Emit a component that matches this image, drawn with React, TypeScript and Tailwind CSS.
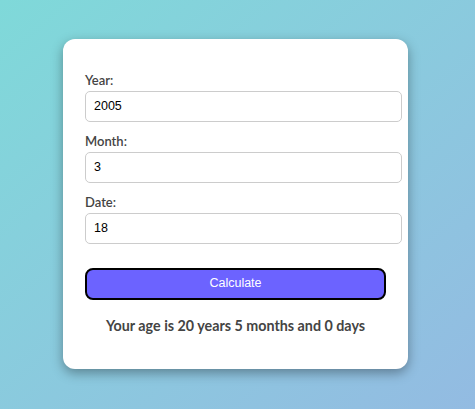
export default function App() {
  const fields = [
    { label: 'Year:', value: '2005' },
    { label: 'Month:', value: '3' },
    { label: 'Date:', value: '18' },
  ]

  return (
    <div className="min-h-screen w-full flex items-center justify-center pr-[4px] pb-[2px] bg-gradient-to-br from-[#7fd9d9] to-[#93bbe2] font-['Lato',sans-serif]">
      <div className="w-[345px] bg-white rounded-[12px] shadow-[0_4px_12px_rgba(0,0,0,0.35)] pl-[22px] pr-[6px] pt-[33px] pb-[34px]">
        {fields.map((f, i) => (
          <div key={f.label} className={i > 0 ? 'mt-[11px]' : ''}>
            <label className="block text-[13px] leading-[16px] font-semibold text-[#444] mb-[3px]">{f.label}</label>
            <input
              type="text"
              defaultValue={f.value}
              className="block w-[317px] h-[31px] px-[8px] border border-[#ccc] rounded-[5px] text-[12.5px] text-black font-['Liberation_Sans',Arial,sans-serif] outline-none"
            />
          </div>
        ))}
        <button className="mt-[24px] w-[301px] h-[32px] bg-[#6c63ff] border-2 border-black rounded-[8px] text-white text-[12.5px] font-['Liberation_Sans',Arial,sans-serif]">
          Calculate
        </button>
        <p className="mt-[17px] w-[301px] text-center text-[14.3px] leading-[18px] font-bold text-[#444]">
          Your age is 20 years 5 months and 0 days
        </p>
      </div>
    </div>
  )
}
